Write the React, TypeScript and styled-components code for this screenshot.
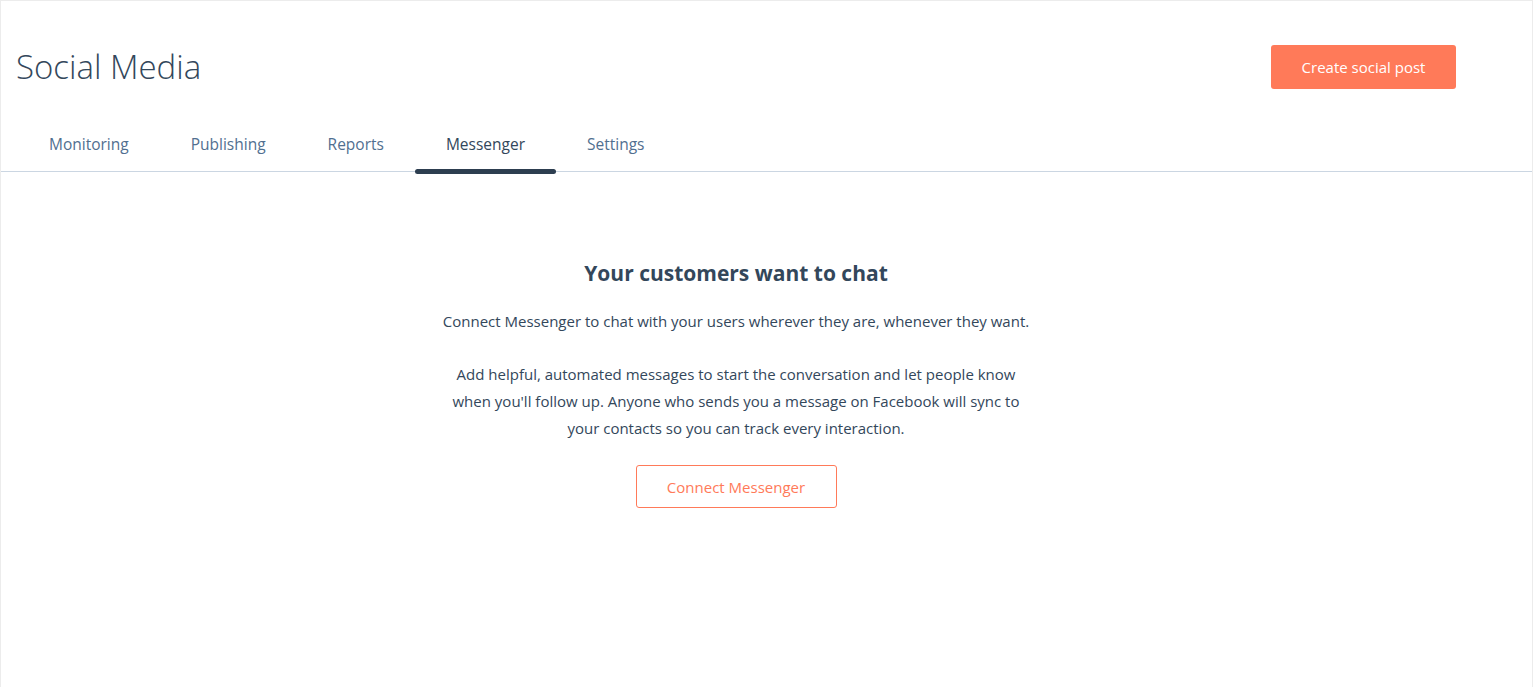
import styled, { createGlobalStyle } from "styled-components";

const GlobalStyle = createGlobalStyle`
  html, body {
    margin: 0;
    padding: 0;
    background: #ffffff;
  }
  body {
    font-family: "Open Sans", Lato, sans-serif;
    color: #33475b;
  }
`;

const tabs = ["Monitoring", "Publishing", "Reports", "Messenger", "Settings"];

export default function App() {
  return (
    <>
      <GlobalStyle />
      <Page>
        <Header>
          <Title>Social Media</Title>
          <PrimaryButton>Create social post</PrimaryButton>
        </Header>
        <TabBar>
          {tabs.map((t) => (
            <Tab key={t} $active={t === "Messenger"}>
              {t}
            </Tab>
          ))}
        </TabBar>
        <EmptyState>
          <Heading>Your customers want to chat</Heading>
          <Text>
            Connect Messenger to chat with your users wherever they are, whenever
            they want.
          </Text>
          <Text>
            Add helpful, automated messages to start the conversation and let
            people know when you'll follow up. Anyone who sends you a message on
            Facebook will sync to your contacts so you can track every
            interaction.
          </Text>
          <SecondaryButton>Connect Messenger</SecondaryButton>
        </EmptyState>
      </Page>
    </>
  );
}

const Page = styled.div`
  height: 687px;
  box-sizing: border-box;
  border: 1px solid #ececec;
  border-bottom: none;
`;

const Header = styled.div`
  display: flex;
  align-items: center;
  justify-content: space-between;
  width: 1455px;
  padding: 44px 0 0 15px;
  box-sizing: border-box;
`;

const Title = styled.h1`
  margin: 0;
  font-size: 33px;
  font-weight: 300;
  line-height: 44px;
  color: #33475b;
`;

const PrimaryButton = styled.button`
  width: 185px;
  height: 44px;
  border: none;
  border-radius: 3px;
  background: #ff7a59;
  color: #ffffff;
  font-family: inherit;
  font-size: 15px;
  cursor: pointer;
`;

const TabBar = styled.div`
  display: flex;
  margin-top: 28px;
  padding-left: 17px;
  border-bottom: 1px solid #cbd6e2;
`;

const Tab = styled.div<{ $active?: boolean }>`
  position: relative;
  padding: 0 31px;
  height: 54px;
  display: flex;
  align-items: center;
  font-size: 15.5px;
  color: ${(p) => (p.$active ? "#33475b" : "#516f90")};
  &::after {
    content: "";
    display: ${(p) => (p.$active ? "block" : "none")};
    position: absolute;
    left: 0;
    right: 0;
    bottom: -3px;
    height: 5px;
    border-radius: 3px;
    background: #2d3e50;
  }
`;

const EmptyState = styled.div`
  width: 1455px;
  padding-left: 15px;
  box-sizing: border-box;
  display: flex;
  flex-direction: column;
  align-items: center;
  padding-top: 86px;
`;

const Heading = styled.h2`
  margin: 0 0 20px;
  font-size: 21px;
  font-weight: 700;
  line-height: 30px;
  color: #33475b;
`;

const Text = styled.p`
  margin: 0 0 26px;
  max-width: 600px;
  text-align: center;
  font-size: 15px;
  line-height: 27px;
  color: #33475b;
`;

const SecondaryButton = styled.button`
  margin-top: -3px;
  width: 201px;
  height: 43px;
  border: 1px solid #ff7a59;
  border-radius: 3px;
  background: #ffffff;
  color: #ff7a59;
  font-family: inherit;
  font-size: 15px;
  cursor: pointer;
`;
